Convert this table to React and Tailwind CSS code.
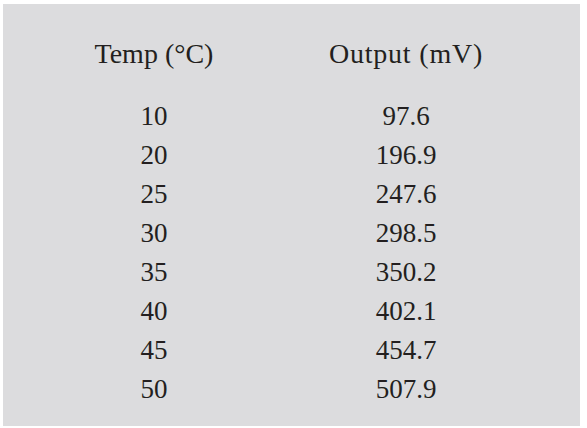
export default function App() {
  const rows = [
    ["10", "97.6"],
    ["20", "196.9"],
    ["25", "247.6"],
    ["30", "298.5"],
    ["35", "350.2"],
    ["40", "402.1"],
    ["45", "454.7"],
    ["50", "507.9"],
  ];
  return (
    <div className="w-[587px] h-[428px] bg-white pt-[4px] pl-[3px]">
      <div
        className="w-[577px] h-[422px] bg-[#dcdcde] pt-[30px] text-[#231f20] text-[27px] leading-[39px]"
        style={{ fontFamily: '"Liberation Serif", "Times New Roman", serif' }}
      >
        <div className="grid grid-cols-[302px_202px] mb-[24px] text-[28px]">
          <div className="text-center">Temp (°C)</div>
          <div className="text-center tracking-[0.8px]">Output (mV)</div>
        </div>
        {rows.map(([t, o]) => (
          <div key={t} className="grid grid-cols-[302px_202px]">
            <div className="text-center">{t}</div>
            <div className="text-center">{o}</div>
          </div>
        ))}
      </div>
    </div>
  );
}
